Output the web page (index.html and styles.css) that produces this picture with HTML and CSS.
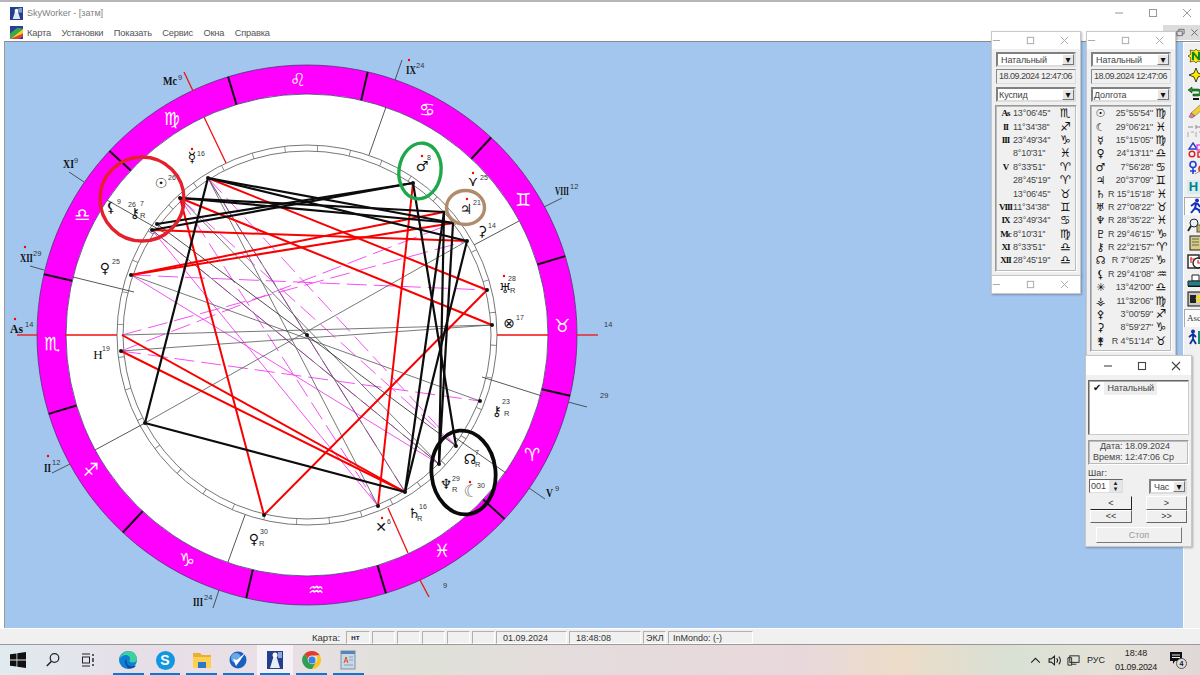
FILE: index.html
```html
<!DOCTYPE html>
<html lang="ru">
<head>
<meta charset="utf-8">
<title>SkyWorker - [затм]</title>
<link rel="stylesheet" href="styles.css">
</head>
<body>
<svg class="defs" width="0" height="0">
  <symbol id="c-min" viewBox="0 0 10 10"><path d="M1 5h8"/></symbol>
  <symbol id="c-max" viewBox="0 0 10 10"><rect x="1.5" y="1.5" width="7" height="7"/></symbol>
  <symbol id="c-close" viewBox="0 0 10 10"><path d="M1 1l8 8M9 1l-8 8"/></symbol>
</svg>
<div class="app">
  <header class="titlebar">
    <svg class="app-icon" viewBox="0 0 14 14"><rect width="14" height="14" fill="#24408c"/><path d="M3 13L6 3l2 0 3 10z" fill="#dfe8f5"/><circle cx="7" cy="4" r="2" fill="#fff"/><rect x="9" y="1" width="4" height="5" fill="#7a9ad0"/></svg>
    <span class="title-text">SkyWorker - [затм]</span>
    <div class="win-ctrls">
      <svg class="ctrl"><use href="#c-min"/></svg>
      <svg class="ctrl"><use href="#c-max"/></svg>
      <svg class="ctrl"><use href="#c-close"/></svg>
    </div>
  </header>
  <nav class="menubar">
    <svg class="menu-icon" viewBox="0 0 14 14"><rect width="14" height="14" fill="#2a3f96"/><path d="M0 14L14 3v5L6 14z" fill="#f0d020"/><path d="M0 14L14 8v3l-5 3z" fill="#e04040"/><path d="M0 14V8l8-6 6 1z" fill="#38a848"/></svg>
    <span class="menu-item">Карта</span>
    <span class="menu-item">Установки</span>
    <span class="menu-item">Показать</span>
    <span class="menu-item">Сервис</span>
    <span class="menu-item">Окна</span>
    <span class="menu-item">Справка</span>
    <div class="mdi-ctrls">
      <svg class="mdi" viewBox="0 0 10 10"><path d="M1 3.500h6v5H1zM3 3.500V1.500h6v5H7"/></svg>
      <svg class="mdi" viewBox="0 0 10 10"><path d="M1.500 1.500l7 7M8.500 1.500l-7 7"/></svg>
    </div>
  </nav>
  <main class="workspace">
    <svg class="chart" viewBox="5 42 1178 586">
      <!-- wheel -->
      <circle class="band" cx="307" cy="335" r="255.5"/>
      <circle class="band-edge" cx="307" cy="335" r="270"/>
      <circle class="band-inner" cx="307" cy="335" r="241"/>
      <circle class="ring" cx="307" cy="335" r="190"/>
      <circle class="ring" cx="307" cy="335" r="184"/>
      <circle class="ring-ticks" cx="307" cy="335" r="187" transform="rotate(-17 307 335)"/>
      <!-- sign dividers -->
      <g class="divider">
        <line x1="537.5" y1="264.5" x2="565.2" y2="256.1"/><line x1="471.4" y1="158.7" x2="491.1" y2="137.5"/>
        <line x1="361.2" y1="100.2" x2="367.7" y2="72"/><line x1="236.5" y1="104.6" x2="228.1" y2="76.8"/>
        <line x1="130.8" y1="170.6" x2="109.5" y2="150.9"/><line x1="72.2" y1="280.8" x2="44" y2="274.3"/>
        <line x1="76.5" y1="405.5" x2="48.8" y2="413.9"/><line x1="142.6" y1="511.2" x2="122.9" y2="532.5"/>
        <line x1="252.8" y1="569.8" x2="246.3" y2="598"/><line x1="377.5" y1="565.4" x2="385.9" y2="593.2"/>
        <line x1="483.2" y1="499.4" x2="504.5" y2="519.1"/><line x1="541.8" y1="389.2" x2="570" y2="395.8"/>
      </g>
      <!-- zodiac glyphs -->
      <g class="sign">
        <text x="562" y="332">♉</text><text x="523" y="206">♊</text><text x="427" y="116">♋</text>
        <text x="298" y="86">♌</text><text x="172" y="125">♍</text><text x="82" y="221">♎</text>
        <text x="52" y="350">♏</text><text x="91" y="476">♐</text><text x="187" y="566">♑</text>
        <text x="316" y="596">♒</text><text x="442" y="557">♓</text><text x="532" y="461">♈</text>
      </g>
      <!-- house cusps -->
      <g class="cusp">
        <line x1="107" y1="200" x2="165" y2="233"/><line x1="84" y1="182" x2="69" y2="172"/>
        <line x1="73" y1="277" x2="134" y2="292"/><line x1="44" y1="270" x2="30" y2="266"/>
        <line x1="95" y1="450" x2="145" y2="423"/><line x1="70" y1="464" x2="52" y2="473"/>
        <line x1="228" y1="562" x2="245" y2="515"/><line x1="219" y1="590" x2="213" y2="608"/>
        <line x1="386" y1="107" x2="369" y2="155"/><line x1="395" y1="80" x2="402" y2="60"/>
        <line x1="519" y1="221" x2="474" y2="245"/><line x1="544" y1="207" x2="562" y2="198"/>
        <line x1="542" y1="396" x2="482" y2="377"/><line x1="568" y1="402" x2="587" y2="407"/>
        <line x1="506" y1="473" x2="453" y2="436"/><line x1="529" y1="488" x2="545" y2="499"/>
      </g>
      <g class="axis">
        <line x1="17" y1="335" x2="37" y2="335"/><line x1="65" y1="335" x2="117" y2="335"/>
        <line x1="497" y1="335" x2="548" y2="335"/><line x1="577" y1="335" x2="598" y2="335"/>
        <line x1="184" y1="72" x2="193" y2="91"/><line x1="204" y1="117" x2="226" y2="163"/>
        <line x1="388" y1="508" x2="408" y2="553"/><line x1="420" y1="580" x2="429" y2="597"/>
      </g>
      <!-- magenta aspects -->
      <g class="asp-dash">
        <line x1="131" y1="275" x2="487" y2="290"/><line x1="122" y1="335" x2="467" y2="241"/>
        <line x1="121" y1="351" x2="453" y2="223"/><line x1="121" y1="351" x2="480" y2="401"/>
        <line x1="208" y1="178" x2="456" y2="446"/><line x1="180" y1="198" x2="456" y2="446"/>
        <line x1="152" y1="230" x2="439" y2="464"/><line x1="180" y1="198" x2="378" y2="506"/>
        <line x1="208" y1="178" x2="405" y2="492"/>
      </g>
      <g class="asp-solid">
        <line x1="131" y1="275" x2="439" y2="464"/><line x1="152" y1="230" x2="378" y2="506"/>
      </g>
      <!-- gray aspects -->
      <g class="asp-gray">
        <line x1="208" y1="178" x2="378" y2="506"/><line x1="180" y1="198" x2="439" y2="464"/>
        <line x1="152" y1="230" x2="439" y2="464"/><line x1="131" y1="275" x2="480" y2="401"/>
        <line x1="122" y1="335" x2="492" y2="325"/><line x1="121" y1="351" x2="492" y2="325"/>
        <line x1="145" y1="423" x2="467" y2="241"/><line x1="208" y1="178" x2="405" y2="492"/>
      </g>
      <line class="asp-thin" x1="157" y1="224" x2="456" y2="446"/>
      <!-- red aspects -->
      <g class="asp-red">
        <line x1="208" y1="178" x2="487" y2="290"/><line x1="180" y1="198" x2="492" y2="325"/>
        <line x1="180" y1="198" x2="264" y2="515"/><line x1="152" y1="230" x2="467" y2="241"/>
        <line x1="131" y1="275" x2="444" y2="212"/><line x1="131" y1="275" x2="453" y2="223"/>
        <line x1="122" y1="335" x2="405" y2="492"/><line x1="121" y1="351" x2="405" y2="492"/>
        <line x1="264" y1="515" x2="487" y2="290"/><line x1="378" y1="506" x2="413" y2="183"/>
      </g>
      <!-- black aspects -->
      <g class="asp-black">
        <line x1="208" y1="178" x2="467" y2="241"/><line x1="208" y1="178" x2="453" y2="223"/>
        <line x1="180" y1="198" x2="444" y2="212"/><line x1="180" y1="198" x2="453" y2="223"/>
        <line x1="157" y1="224" x2="413" y2="183"/><line x1="152" y1="230" x2="413" y2="183"/>
        <line x1="208" y1="178" x2="145" y2="423"/><line x1="145" y1="423" x2="405" y2="492"/>
        <line x1="405" y1="492" x2="467" y2="241"/><line x1="405" y1="492" x2="444" y2="212"/>
        <line x1="413" y1="183" x2="456" y2="446"/><line x1="444" y1="212" x2="439" y2="464"/>
        <line x1="453" y1="223" x2="439" y2="464"/>
      </g>
      <!-- nodes -->
      <g class="node">
        <circle cx="208" cy="178" r="2"/><circle cx="180" cy="198" r="2"/><circle cx="157" cy="224" r="2"/>
        <circle cx="152" cy="230" r="2"/><circle cx="131" cy="275" r="2"/><circle cx="121" cy="351" r="2"/>
        <circle cx="413" cy="183" r="2"/><circle cx="444" cy="212" r="1.5"/><circle cx="453" cy="223" r="1.5"/>
        <circle cx="467" cy="241" r="2"/><circle cx="487" cy="290" r="2"/><circle cx="492" cy="325" r="2"/>
        <circle cx="145" cy="423" r="2"/><circle cx="480" cy="401" r="2"/><circle cx="456" cy="446" r="2"/>
        <circle cx="439" cy="464" r="2"/><circle cx="405" cy="492" r="2"/><circle cx="378" cy="506" r="2"/>
        <circle cx="264" cy="515" r="2"/><circle cx="307" cy="335" r="2"/>
      </g>
      <!-- planets -->
      <g class="planet">
        <text x="192" y="162">☿</text><text x="161" y="188">☉</text><text x="111" y="212">⚸</text>
        <text x="135" y="218">⚷</text><text x="105" y="273">♀</text><text x="98" y="359" class="serif">H</text>
        <text x="422" y="171">♂</text><text x="466" y="214">♃</text><text x="473" y="186">⋎</text>
        <text x="482" y="236">⚳</text><text x="505" y="293">♅</text><text x="509" y="328">⊗</text>
        <text x="497" y="416">⚷</text><text x="470" y="464">☊</text><text x="446" y="489">♆</text>
        <text x="414" y="518">♄</text><text x="381" y="532">✕</text><text x="254" y="544">♀</text>
      </g>
      <text class="moon" x="471" y="497">☾</text>
      <g class="deg">
        <text x="197" y="156">16</text><text x="168" y="180">26</text><text x="117" y="204">9</text>
        <text x="128" y="207">26</text><text x="140" y="206">7</text><text x="112" y="264">25</text>
        <text x="102" y="351">19</text><text x="427" y="160">8</text><text x="473" y="205">21</text>
        <text x="480" y="180">25</text><text x="488" y="228">14</text><text x="508" y="281">28</text>
        <text x="516" y="320">17</text><text x="502" y="404">23</text><text x="475" y="455">7</text>
        <text x="452" y="481">29</text><text x="477" y="488">30</text><text x="419" y="509">16</text>
        <text x="387" y="524">6</text><text x="260" y="534">30</text>
      </g>
      <g class="retro">
        <text x="140" y="218">R</text><text x="510" y="293">R</text><text x="504" y="416">R</text>
        <text x="475" y="467">R</text><text x="452" y="492">R</text><text x="417" y="521">R</text><text x="259" y="546">R</text>
      </g>
      <g class="reddot">
        <circle cx="192" cy="149" r="1.2"/><circle cx="422" cy="156" r="1.2"/><circle cx="473" cy="173" r="1.2"/>
        <circle cx="467" cy="199" r="1.2"/><circle cx="504" cy="276" r="1.2"/><circle cx="470" cy="482" r="1.2"/>
        <circle cx="382" cy="518" r="1.2"/><circle cx="15" cy="319" r="1.2"/><circle cx="48" cy="456" r="1.2"/>
        <circle cx="409" cy="60" r="1.2"/><circle cx="25" cy="247" r="1.2"/>
      </g>
      <!-- house labels -->
      <g class="house">
        <text x="163" y="85" textLength="14" lengthAdjust="spacingAndGlyphs">Mc</text>
        <text x="63" y="168" textLength="11" lengthAdjust="spacingAndGlyphs">XI</text>
        <text x="20" y="262" textLength="13" lengthAdjust="spacingAndGlyphs">XII</text>
        <text x="10" y="333" textLength="13" lengthAdjust="spacingAndGlyphs">As</text>
        <text x="44" y="472" textLength="7" lengthAdjust="spacingAndGlyphs">II</text>
        <text x="193" y="606" textLength="10" lengthAdjust="spacingAndGlyphs">III</text>
        <text x="406" y="74" textLength="10" lengthAdjust="spacingAndGlyphs">IX</text>
        <text x="555" y="195" textLength="14" lengthAdjust="spacingAndGlyphs">VIII</text>
        <text x="546" y="497" textLength="7" lengthAdjust="spacingAndGlyphs">V</text>
      </g>
      <g class="house-deg">
        <text x="178" y="80">9</text><text x="74" y="163">9</text><text x="33" y="256">29</text>
        <text x="25" y="327">14</text><text x="52" y="465">12</text><text x="204" y="600">24</text>
        <text x="416" y="68">24</text><text x="570" y="189">12</text><text x="604" y="327">14</text>
        <text x="600" y="398">29</text><text x="555" y="491">9</text><text x="443" y="588">9</text>
      </g>
      <!-- hand-drawn highlight rings -->
      <ellipse class="mark mark-red" cx="142" cy="199" rx="42" ry="42"/>
      <ellipse class="mark mark-green" cx="420" cy="171" rx="21" ry="28" transform="rotate(8 420 171)"/>
      <ellipse class="mark mark-brown" cx="465.5" cy="207.5" rx="19" ry="17"/>
      <ellipse class="mark mark-black" cx="463.5" cy="472.5" rx="32" ry="42" transform="rotate(-6 463.5 472.5)"/>
    </svg>
    <aside class="toolbar">
      <div class="tool"><svg viewBox="0 0 18 16"><path d="M1 8l3-2-1-4 4 1 2-2 2 2 4-1-1 4 3 2-3 2 1 4-4-1-2 2-2-2-4 1 1-4z" fill="#ffe800" stroke="#222" stroke-width=".6"/><path d="M5 12V4h2l4 5V4h2v8h-2L7 7v5z" fill="#0a8a20"/></svg></div>
      <div class="tool"><svg viewBox="0 0 18 16"><path d="M9 1l2 5 5 2-5 2-2 5-2-5-5-2 5-2z" fill="#ffe800" stroke="#111" stroke-width=".8"/></svg></div>
      <div class="tool"><svg viewBox="0 0 18 16"><path d="M5 3h6a3.500 3.500 0 010 7H6v-2h5a1.500 1.500 0 000-3H5v2L1 4l4-3z" fill="#10a020" stroke="#111" stroke-width=".5"/><path d="M6 12h6v2H6z" fill="#111"/></svg></div>
      <div class="tool"><svg viewBox="0 0 18 16"><path d="M13 1l4 3-9 8-4-3z" fill="#f0d030" stroke="#555" stroke-width=".5"/><path d="M4 9l4 3-3 2-3-1z" fill="#f070a0" stroke="#555" stroke-width=".5"/></svg></div>
      <div class="tool"><svg viewBox="0 0 18 16"><path d="M1 4h5M9 2v4M9 4h8" stroke="#888" fill="none"/><path d="M1 9v5M4 9h3M9 9v5M12 9h3" stroke="#aaa" fill="none"/></svg></div>
      <div class="tool"><svg viewBox="0 0 18 16"><path d="M6 1l4 6H2z" fill="none" stroke="#2040d0" stroke-width="1.400"/><circle cx="5" cy="12" r="2.800" fill="none" stroke="#e02020" stroke-width="1.400"/><rect x="10" y="3" width="6" height="5" fill="none" stroke="#e040e0" stroke-width="1.400"/><rect x="11" y="10" width="5" height="5" fill="none" stroke="#e02020" stroke-width="1.400"/></svg></div>
      <div class="tool"><svg viewBox="0 0 18 16"><circle cx="6" cy="4.500" r="3" fill="none" stroke="#2040d0" stroke-width="1.600"/><path d="M6 8v6M3 11h6" stroke="#2040d0" stroke-width="1.600"/><circle cx="15" cy="9" r="3" fill="none" stroke="#e02020" stroke-width="1.600"/><path d="M8 14l5-3" stroke="#999"/></svg></div>
      <div class="tool tool-h"><span class="h-glyph">H</span></div>
      <div class="tool tool-on"><svg viewBox="0 0 18 16"><circle cx="10" cy="2.500" r="2" fill="#1030c0"/><path d="M4 8l4-3 3 1 2 3M9 6l-1 4-4 5M8 10l4 2 1 3" fill="none" stroke="#1030c0" stroke-width="2"/></svg></div>
      <div class="tool"><svg viewBox="0 0 18 16"><circle cx="7" cy="6" r="4" fill="#e8f0f8" stroke="#222"/><path d="M4 9l-3 5" stroke="#222" stroke-width="1.800"/><rect x="10" y="8" width="7" height="7" fill="#c0b060" stroke="#555"/></svg></div>
      <div class="tool"><svg viewBox="0 0 18 16"><rect x="3" y="1" width="11" height="14" fill="#d8cc80" stroke="#222"/><path d="M5 4h7M5 7h7M5 10h7" stroke="#666"/></svg></div>
      <div class="tool"><svg viewBox="0 0 18 16"><rect x="1" y="1" width="11" height="13" fill="#fff" stroke="#222" stroke-width="1.400"/><circle cx="11" cy="9" r="5" fill="#fff" stroke="#222" stroke-width="1.400"/><path d="M4 3v6M4 5h4M11 6v3h3" stroke="#e02020" stroke-width="1.200" fill="none"/></svg></div>
      <div class="tool"><svg viewBox="0 0 18 16"><path d="M5 2h7v6H5z" fill="#fff" stroke="#222"/><path d="M1 8h16v5H1z" fill="#20808a" stroke="#222"/><path d="M1 13h16v1H1z" fill="#111"/></svg></div>
      <div class="tool"><svg viewBox="0 0 18 16"><rect x="1" y="1" width="15" height="14" fill="#c8c8c8" stroke="#111"/><rect x="3" y="4" width="6" height="8" fill="#222"/><path d="M10 7l6 0-3-3zM9 10h8" stroke="#ffe000" stroke-width="1.600" fill="#ffe000"/></svg></div>
      <div class="tool tool-on tool-asc"><span class="asc-glyph">Asc</span></div>
      <div class="tool"><svg viewBox="0 0 18 16"><circle cx="6" cy="2.500" r="2" fill="#1030a0"/><path d="M6 5v5l-3 5M6 10l3 5M2 8l4-3 3 3" fill="none" stroke="#1030a0" stroke-width="1.800"/><rect x="11" y="2" width="6" height="13" fill="#108a70"/></svg></div>
    </aside>
  </main>
  <footer class="statusbar">
    <span class="st-label">Карта:</span>
    <span class="st-cell st-nt">нт</span>
    <span class="st-cell st-small"></span><span class="st-cell st-small"></span><span class="st-cell st-small"></span><span class="st-cell st-small"></span><span class="st-cell st-small"></span>
    <span class="st-cell st-date">01.09.2024</span>
    <span class="st-cell st-time">18:48:08</span>
    <span class="st-cell st-ekl">ЭКЛ</span>
    <span class="st-cell st-mondo">InMondo: (-)</span>
  </footer>
  <div class="taskbar">
    <div class="tb-btn tb-sys"><svg viewBox="0 0 16 16"><path d="M0 2.300l6.500-.9v6.200H0zM7.300 1.300L16 0v7.600H7.300zM0 8.400h6.500v6.200L0 13.700zM7.300 8.400H16V16l-8.700-1.300z" fill="#111"/></svg></div>
    <div class="tb-btn tb-sys"><svg viewBox="0 0 16 16"><circle cx="9.500" cy="6" r="4.300" fill="none" stroke="#222" stroke-width="1.200"/><path d="M6.500 9.200L1.800 14" stroke="#222" stroke-width="1.500"/></svg></div>
    <div class="tb-btn tb-sys"><svg viewBox="0 0 16 16"><path d="M2 2h8M2 14h8" stroke="#222"/><rect x="2.500" y="5" width="7" height="6" fill="none" stroke="#222"/><path d="M13 2v2M13 6v4M13 12v2" stroke="#222" stroke-width="1.400"/></svg></div>
    <div class="tb-btn tb-app tb-first"><svg viewBox="0 0 20 20"><circle cx="10" cy="10" r="9" fill="#0f7fd4"/><path d="M1.500 9C3 3 8 1 11 1c4.500 0 8 3.500 8 8 0 2-1.500 3.500-4 3.500-2 0-3.500-1-3.500-1.500 0-.5.5-1 .5-2.500C12 6.500 10 5 8 5 5 5 3 7 1.500 9z" fill="#3ed0a0"/><path d="M8 9c-2 2-1 7 3 9.500 3 .5 6-1 7-3-3 1.500-8 1-9-2-.5-1.500-.5-3-1-4.500z" fill="#084f9c"/></svg></div>
    <div class="tb-btn tb-app"><span class="skype">S</span></div>
    <div class="tb-btn tb-app"><svg viewBox="0 0 20 20"><path d="M1 3h7l2 2h9v3H1z" fill="#e8b030"/><path d="M1 7h18v11H1z" fill="#ffd050"/><rect x="6" y="12" width="8" height="6" fill="#2a78c8"/></svg></div>
    <div class="tb-btn tb-app"><svg viewBox="0 0 20 20"><circle cx="10" cy="10" r="8.500" fill="#1a5fc0"/><circle cx="8" cy="8" r="5" fill="#6aa8e8"/><path d="M5 9l3 7L18 2l-9 8z" fill="#fff"/></svg></div>
    <div class="tb-btn tb-app tb-active"><svg viewBox="0 0 20 20"><rect x="2" y="1" width="16" height="18" fill="#24408c"/><path d="M5 18L9 5h2l4 13z" fill="#e8eef8"/><circle cx="10" cy="5" r="2.500" fill="#fff"/><rect x="13" y="2" width="4" height="6" fill="#8aa8d8"/></svg></div>
    <div class="tb-btn tb-app"><svg viewBox="0 0 20 20"><path d="M10 1a9 9 0 017.800 4.500H10a4.500 4.500 0 00-4.300 3.200L2.500 4A9 9 0 0110 1z" fill="#e03c30"/><path d="M17.800 5.500A9 9 0 0110 19l3.900-6.800a4.500 4.500 0 00-.1-6.700z" fill="#f8c820"/><path d="M2.500 4a9 9 0 007.500 15l3.900-6.800a4.500 4.500 0 01-8.100-3.500z" fill="#30a050"/><circle cx="10" cy="10" r="3.500" fill="#3a80e8"/></svg></div>
    <div class="tb-btn tb-app"><svg viewBox="0 0 20 20"><rect x="3" y="1" width="14" height="18" fill="#c8d8e8" stroke="#7a92aa"/><rect x="3" y="1" width="14" height="3" fill="#5a84b8"/><path d="M6 13l2-6 2 6M7 11h2" stroke="#e05020" fill="none"/><path d="M11 7h4M11 10h4M6 15h9" stroke="#8aa0b8"/></svg></div>
    <div class="tray">
      <svg class="tray-ic" viewBox="0 0 12 12"><path d="M2 8l4-4 4 4" fill="none" stroke="#222"/></svg>
      <svg class="tray-ic" viewBox="0 0 12 12"><path d="M1 4.500h2L6 2v8L3 7.500H1z" fill="none" stroke="#222"/><path d="M8 4a3 3 0 010 4M10 2.500a5 5 0 010 7" fill="none" stroke="#222"/></svg>
      <svg class="tray-ic" viewBox="0 0 14 12"><rect x="3" y="1" width="10" height="7" fill="none" stroke="#222"/><path d="M1 3h4v8H1zM5 10h5" fill="none" stroke="#222"/></svg>
      <span class="lang">РУС</span>
      <div class="clock"><span>18:48</span><span class="clock-date">01.09.2024</span></div>
      <div class="notify"><svg viewBox="0 0 14 14"><path d="M1 1h12v9H6l-2 3v-3H1z" fill="#111"/><path d="M3 4h8M3 6.500h8" stroke="#eee"/></svg><span class="badge">4</span></div>
    </div>
  </div>

  <!-- floating child windows -->
  <section class="win win-cusp">
    <div class="win-title"><svg class="wc"><use href="#c-min"/></svg><svg class="wc"><use href="#c-max"/></svg><svg class="wc"><use href="#c-close"/></svg></div>
    <div class="win-body">
      <div class="combo"><span class="combo-text">Натальный</span><span class="arrow">▾</span></div>
      <div class="datebox">18.09.2024 12:47:06</div>
      <div class="combo"><span class="combo-text combo-tight">Куспид</span><span class="arrow">▾</span></div>
      <div class="listing listing-cusp">
        <div class="row"><span class="rk serif">As</span><span class="rv">13°06'45''</span><span class="rs">♏</span></div>
        <div class="row"><span class="rk serif">II</span><span class="rv">11°34'38''</span><span class="rs">♐</span></div>
        <div class="row"><span class="rk serif">III</span><span class="rv">23°49'34''</span><span class="rs">♑</span></div>
        <div class="row"><span class="rk"></span><span class="rv">8°10'31''</span><span class="rs">♓</span></div>
        <div class="row"><span class="rk serif">V</span><span class="rv">8°33'51''</span><span class="rs">♈</span></div>
        <div class="row"><span class="rk"></span><span class="rv">28°45'19''</span><span class="rs">♈</span></div>
        <div class="row"><span class="rk"></span><span class="rv">13°06'45''</span><span class="rs">♉</span></div>
        <div class="row"><span class="rk serif">VIII</span><span class="rv">11°34'38''</span><span class="rs">♊</span></div>
        <div class="row"><span class="rk serif">IX</span><span class="rv">23°49'34''</span><span class="rs">♋</span></div>
        <div class="row"><span class="rk serif">Mc</span><span class="rv">8°10'31''</span><span class="rs">♍</span></div>
        <div class="row"><span class="rk serif">XI</span><span class="rv">8°33'51''</span><span class="rs">♎</span></div>
        <div class="row"><span class="rk serif">XII</span><span class="rv">28°45'19''</span><span class="rs">♎</span></div>
      </div>
    </div>
  </section>
  <section class="win win-stub">
    <div class="win-title"><svg class="wc"><use href="#c-min"/></svg><svg class="wc"><use href="#c-max"/></svg><svg class="wc"><use href="#c-close"/></svg></div>
  </section>
  <section class="win win-long">
    <div class="win-title"><svg class="wc"><use href="#c-min"/></svg><svg class="wc"><use href="#c-max"/></svg><svg class="wc"><use href="#c-close"/></svg></div>
    <div class="win-body">
      <div class="combo"><span class="combo-text">Натальный</span><span class="arrow">▾</span></div>
      <div class="datebox">18.09.2024 12:47:06</div>
      <div class="combo"><span class="combo-text combo-tight">Долгота</span><span class="arrow">▾</span></div>
      <div class="listing listing-long">
        <div class="row"><span class="rk">☉</span><span class="rv">25°55'54''</span><span class="rs">♍</span></div>
        <div class="row"><span class="rk">☾</span><span class="rv">29°06'21''</span><span class="rs">♓</span></div>
        <div class="row"><span class="rk">☿</span><span class="rv">15°15'05''</span><span class="rs">♍</span></div>
        <div class="row"><span class="rk">♀</span><span class="rv">24°13'11''</span><span class="rs">♎</span></div>
        <div class="row"><span class="rk">♂</span><span class="rv">7°56'28''</span><span class="rs">♋</span></div>
        <div class="row"><span class="rk">♃</span><span class="rv">20°37'09''</span><span class="rs">♊</span></div>
        <div class="row"><span class="rk">♄</span><span class="rv">R 15°15'18''</span><span class="rs">♓</span></div>
        <div class="row"><span class="rk">♅</span><span class="rv">R 27°08'22''</span><span class="rs">♉</span></div>
        <div class="row"><span class="rk">♆</span><span class="rv">R 28°35'22''</span><span class="rs">♓</span></div>
        <div class="row"><span class="rk">♇</span><span class="rv">R 29°46'15''</span><span class="rs">♑</span></div>
        <div class="row"><span class="rk">⚷</span><span class="rv">R 22°21'57''</span><span class="rs">♈</span></div>
        <div class="row"><span class="rk">☊</span><span class="rv">R 7°08'25''</span><span class="rs">♑</span></div>
        <div class="row"><span class="rk">⚸</span><span class="rv">R 29°41'08''</span><span class="rs">♒</span></div>
        <div class="row"><span class="rk">✳</span><span class="rv">13°42'00''</span><span class="rs">♎</span></div>
        <div class="row"><span class="rk">⚶</span><span class="rv">11°32'06''</span><span class="rs">♍</span></div>
        <div class="row"><span class="rk">⚴</span><span class="rv">3°00'59''</span><span class="rs">♐</span></div>
        <div class="row"><span class="rk">⚳</span><span class="rv">8°59'27''</span><span class="rs">♑</span></div>
        <div class="row"><span class="rk">⚵</span><span class="rv">R 4°51'14''</span><span class="rs">♉</span></div>
      </div>
    </div>
  </section>
  <section class="win win-step">
    <div class="win-title win-title-lg"><svg class="wc"><use href="#c-min"/></svg><svg class="wc"><use href="#c-max"/></svg><svg class="wc"><use href="#c-close"/></svg></div>
    <div class="step-body">
      <div class="natal-list"><span class="check">✔</span><span class="natal-item">Натальный</span></div>
      <div class="info"><span class="info-date">Дата: 18.09.2024</span><span>Время: 12:47:06 Ср</span></div>
      <div class="step-label">Шаг:</div>
      <div class="step-row">
        <div class="spin"><span class="spin-val">001</span><span class="spin-btn"><i>▴</i><i>▾</i></span></div>
        <div class="combo combo-small"><span class="combo-text">Час</span><span class="arrow">▾</span></div>
      </div>
      <div class="nav-grid">
        <button class="btn btn-pressed">&lt;</button><button class="btn">&gt;</button>
        <button class="btn">&lt;&lt;</button><button class="btn">&gt;&gt;</button>
      </div>
      <button class="btn btn-stop">Стоп</button>
    </div>
  </section>
</div>
</body>
</html>
```

FILE: styles.css
```css
* { box-sizing: border-box; }
html, body { margin: 0; padding: 0; }
body { font-family: "Liberation Sans", Arial, sans-serif; font-size: 9px; color: #444; background: #fff; }
.defs { position: absolute; }
.app { position: relative; width: 1200px; height: 675px; overflow: hidden; display: flex; flex-direction: column; background: #fff; }

/* main window chrome */
.titlebar { height: 24px; flex: none; display: flex; align-items: center; padding: 0 0 0 10px; border-top: 2px solid #b6b6b6; background: #fff; }
.app-icon { width: 13px; height: 13px; }
.title-text { margin-left: 4px; font-size: 9px; color: #808080; }
.win-ctrls { margin-left: auto; margin-right: -4px; display: flex; }
.ctrl { width: 34px; height: 10px; overflow: visible; fill: none; stroke: #999; stroke-width: 1; }
.menubar { height: 17px; flex: none; display: flex; align-items: center; padding-left: 10px; background: #fff; }
.menu-icon { width: 13px; height: 13px; margin-right: 4px; }
.menu-item { margin-right: 10.500px; font-size: 9.300px; color: #555; letter-spacing: -.2px; }
.mdi-ctrls { margin-left: auto; display: flex; justify-content: flex-end; align-items: center; gap: 5px; width: 37px; height: 15px; padding-right: 1px; background: #dcdcdc; }
.mdi { width: 9px; height: 9px; fill: none; stroke: #667; stroke-width: 1; }

/* workspace */
.workspace { flex: 1; min-height: 0; display: flex; margin-left: 4px; border-top: 1px solid #8a8a8a; border-left: 1px solid #9a9a9a; background: #a3c6ee; }
.chart { width: 1178px; height: 586px; flex: none; display: block; }
.band { fill: none; stroke: #ff00ff; stroke-width: 29; }
.band-edge { fill: none; stroke: #4a3a70; stroke-width: .8; }
.band-inner { fill: #fff; stroke: #4a3a70; stroke-width: .8; }
.ring { fill: none; stroke: #666; stroke-width: .9; }
.ring-ticks { fill: none; stroke: #777; stroke-width: 6; stroke-dasharray: .8 31.84; }
.divider line { stroke: #111; stroke-width: 2; }
.sign text { font-family: "DejaVu Sans", sans-serif; font-size: 18px; fill: #fff; text-anchor: middle; }
.cusp line { stroke: #444; stroke-width: .9; }
.axis line { stroke: #f01010; stroke-width: 1.300; }
.asp-dash line { stroke: #f23ef2; stroke-width: .9; stroke-dasharray: 20 7; }
.asp-solid line { stroke: #f23ef2; stroke-width: .9; }
.asp-gray line { stroke: #555; stroke-width: .8; }
.asp-thin { stroke: #222; stroke-width: .8; }
.asp-red line { stroke: #f80000; stroke-width: 2; }
.asp-black line { stroke: #0c0c0c; stroke-width: 2.200; }
.node circle { fill: #111; }
.planet text { font-family: "DejaVu Sans", sans-serif; font-size: 14px; fill: #111; text-anchor: middle; }
.planet .serif { font-family: "Liberation Serif", serif; font-size: 13px; }
.moon { font-family: "DejaVu Sans", sans-serif; font-size: 17px; fill: #777; text-anchor: middle; }
.deg text { font-family: "Liberation Sans", sans-serif; font-size: 7px; fill: #333; }
.retro text { font-family: "Liberation Sans", sans-serif; font-size: 7.500px; fill: #333; }
.reddot circle { fill: #f00; }
.house text { font-family: "Liberation Serif", serif; font-size: 13px; fill: #111; font-weight: 700; }
.house-deg text { font-family: "Liberation Sans", sans-serif; font-size: 7.500px; fill: #333; }
.mark { fill: none; stroke-width: 3.400; }
.mark-red { stroke: #e3202c; }
.mark-green { stroke: #1ea84a; }
.mark-brown { stroke: #b08c6c; }
.mark-black { stroke: #0a0a0a; stroke-width: 3.800; }

/* right toolbar */
.toolbar { flex: 1; min-width: 0; overflow: hidden; display: flex; flex-direction: column; padding-top: 4px; border-top: 1px solid #fff; border-left: 1px solid #fff; background: #f0f0f0; }
.tool { height: 18.700px; flex: none; display: flex; align-items: center; padding-left: 3px; }
.tool svg { width: 18px; height: 16px; flex: none; }
.tool-on { background: #fbfbfb; border-top: 1px solid #aaa; border-left: 1px solid #aaa; padding-left: 2px; }
.tool-h { padding-left: 0; }
.h-glyph { width: 100%; margin-left: 3px; background: #d8ecec; font-family: "Liberation Sans", sans-serif; font-weight: 700; font-size: 13px; line-height: 14px; color: #008090; text-align: center; }
.asc-glyph { font-family: "Liberation Serif", serif; font-size: 9px; color: #333; white-space: nowrap; }

/* status bar */
.statusbar { height: 17px; flex: none; display: flex; align-items: flex-start; gap: 2px; padding: 2px 0 0 312px; border-top: 1px solid #fff; border-bottom: 1px solid #999; background: #f0f0f0; color: #333; }
.st-label { width: 32px; flex: none; font-size: 9.500px; line-height: 13px; }
.st-cell { height: 13px; flex: none; display: flex; align-items: center; border: 1px solid; border-color: #b0b0b0 #fff #fff #b0b0b0; font-size: 9px; }
.st-nt { width: 24px; padding-left: 4px; font-weight: 700; font-size: 8px; }
.st-small { width: 23px; }
.st-date { width: 71px; padding-left: 6px; margin-left: -1px; }
.st-time { width: 72px; padding-left: 6px; }
.st-ekl { width: 23px; padding-left: 2px; }
.st-mondo { width: 85px; padding-left: 4px; }

/* taskbar */
.taskbar { height: 30px; flex: none; display: flex; background: linear-gradient(90deg, #e0ebf0 0, #e6dfe8 130px, #eadfe6 270px, #dfe1d8 420px, #e4dcdc 560px, #e8d8dc 800px, #ecdcc8 900px, #d8e0d4 1010px, #e4e2d8 1100px, #e0d8d8 1200px); }
.tb-btn { width: 36.700px; flex: none; display: flex; align-items: center; justify-content: center; }
.tb-sys { width: 35px; }
.tb-sys svg { width: 16px; height: 16px; }
.tb-first { margin-left: 5px; }
.tb-app { position: relative; }
.tb-app::after { content: ""; position: absolute; left: 3px; right: 3px; bottom: 0; height: 2px; background: #0a78d8; }
.tb-app svg { width: 20px; height: 20px; }
.tb-active { background: #f6f1f6; }
.skype { width: 19px; height: 19px; border-radius: 50%; display: flex; align-items: center; justify-content: center; background: #1097e0; color: #fff; font-size: 14px; font-weight: 700; }
.tray { margin-left: auto; display: flex; align-items: center; padding-right: 13px; color: #222; }
.tray-ic { width: 13px; height: 13px; margin-right: 6px; flex: none; }
.lang { margin-left: 1px; font-size: 9px; }
.clock { margin-left: 10px; width: 42px; display: flex; flex-direction: column; align-items: center; font-size: 9px; line-height: 14px; }
.clock-date { letter-spacing: -.3px; white-space: nowrap; }
.notify { position: relative; width: 18px; height: 18px; margin-left: 12px; }
.notify svg { width: 14px; height: 14px; display: block; }
.badge { position: absolute; right: 0; bottom: 0; width: 11px; height: 11px; border-radius: 50%; border: 1px solid #555; background: #ddd; color: #111; font-size: 7px; font-weight: 700; line-height: 9px; text-align: center; }

/* floating child windows */
.win { position: absolute; display: flex; flex-direction: column; border: 1px solid #c8c8c8; background: #f0f0f0; box-shadow: 1px 1px 2px rgba(40, 40, 60, .35); }
.win-cusp { left: 991px; top: 31px; width: 90px; height: 245px; }
.win-stub { left: 991px; top: 275px; width: 90px; height: 19px; }
.win-long { left: 1086px; top: 31px; width: 90px; height: 325px; }
.win-step { left: 1085px; top: 355px; width: 107px; height: 192px; }
.win-title { height: 17px; flex: none; display: flex; align-items: center; background: #fff; }
.win-title-lg { height: 19px; justify-content: space-between; padding: 0 10px 0 17px; }
.wc { width: 9px; height: 9px; flex: none; margin-right: 25px; fill: none; stroke: #aaa; stroke-width: 1.100; overflow: visible; }
.win-title-lg .wc { stroke: #444; margin: 0; width: 10px; height: 10px; }
.win-body { flex: 1; min-height: 0; display: flex; flex-direction: column; padding: 3px 3px; }
.combo { height: 15px; flex: none; display: flex; align-items: center; justify-content: space-between; margin: 0 1px; border: 2px solid; border-color: #808080 #ddd #ddd #808080; background: #fff; }
.combo-text { padding-left: 3px; font-size: 9px; color: #444; letter-spacing: -.1px; }
.combo-tight { padding-left: 1px; }
.arrow { width: 12px; height: 11px; display: flex; align-items: center; justify-content: center; border: 1px solid; border-color: #fff #777 #777 #fff; background: #e6e6e6; color: #111; font-family: "DejaVu Sans", sans-serif; font-size: 10px; line-height: 1; }
.datebox { height: 15px; flex: none; margin: 2px 1px 3px; padding-left: 2px; border: 1px solid; border-color: #888 #ddd #ddd #888; font-size: 9px; line-height: 13px; letter-spacing: -.5px; white-space: nowrap; color: #444; }
.listing { flex: 1; min-height: 0; margin-top: 3px; padding: 1px 2px 0 2px; border: 1px solid; border-color: #999 #fff #fff #999; outline: 1px solid #bbb; outline-offset: -2px; background: #f0f0f0; }
.row { height: 13.400px; display: grid; align-items: center; line-height: 13px; color: #444; }
.listing-cusp .row { grid-template-columns: 15px 1fr 17px; }
.listing-long .row { grid-template-columns: 15px 1fr 16px; }
.rk { font-family: "DejaVu Sans", sans-serif; font-size: 11px; color: #111; text-align: center; white-space: nowrap; }
.rk.serif { font-family: "Liberation Serif", serif; font-size: 9px; font-weight: 700; letter-spacing: -1px; }
.rv { font-size: 9px; letter-spacing: -.15px; white-space: nowrap; }
.listing-long .rv { text-align: right; }
.rs { font-family: "DejaVu Sans", sans-serif; font-size: 12px; color: #111; text-align: center; }

/* step window */
.step-body { flex: 1; min-height: 0; display: flex; flex-direction: column; padding: 5px 2px 0; }
.natal-list { height: 55px; flex: none; padding: 1px 4px; display: flex; align-items: flex-start; gap: 3px; border: 1px solid; border-color: #666 #ccc #ccc #666; box-shadow: inset 1px 1px 0 #aaa; background: #fff; font-size: 9px; }
.check { font-family: "DejaVu Sans", sans-serif; font-size: 10px; color: #111; line-height: 12px; }
.natal-item { padding: 0 3px; line-height: 13px; background: #eee; }
.info { height: 25px; flex: none; margin-top: 5px; padding: 0 0 0 4px; display: flex; flex-direction: column; border: 1px solid; border-color: #999 #fff #fff #999; outline: 1px solid #bbb; outline-offset: -2px; font-size: 9px; line-height: 11px; }
.info-date { margin-left: 7px; }
.step-label { margin-top: 3px; font-size: 9px; line-height: 11px; }
.step-row { display: flex; justify-content: space-between; align-items: flex-start; padding: 0 2px 0 1px; }
.spin { width: 34px; height: 14px; display: flex; justify-content: space-between; border: 1px solid; border-color: #666 #ddd #ddd #666; background: #fff; }
.spin-val { padding-left: 1px; font-size: 9px; line-height: 12px; }
.spin-btn { width: 13px; display: flex; flex-direction: column; background: #e6e6e6; }
.spin-btn i { height: 6px; font: 7px/6px "DejaVu Sans", sans-serif; text-align: center; color: #222; }
.combo-small { width: 38px; margin: 0; }
.nav-grid { margin: 2px 2px 0 2px; display: grid; grid-template-columns: 42px 41px; justify-content: space-between; }
.btn { height: 13.500px; padding: 0; display: block; border: 1px solid; border-color: #fff #666 #666 #fff; background: #f0f0f0; font: 9px/10px "Liberation Sans", sans-serif; color: #333; }
.btn-pressed { border-color: #eee #222 #222 #eee; }
.btn-stop { width: 86px; height: 16px; margin: 4px 0 0 8px; color: #999; border-color: #fff #777 #777 #fff; }
```
